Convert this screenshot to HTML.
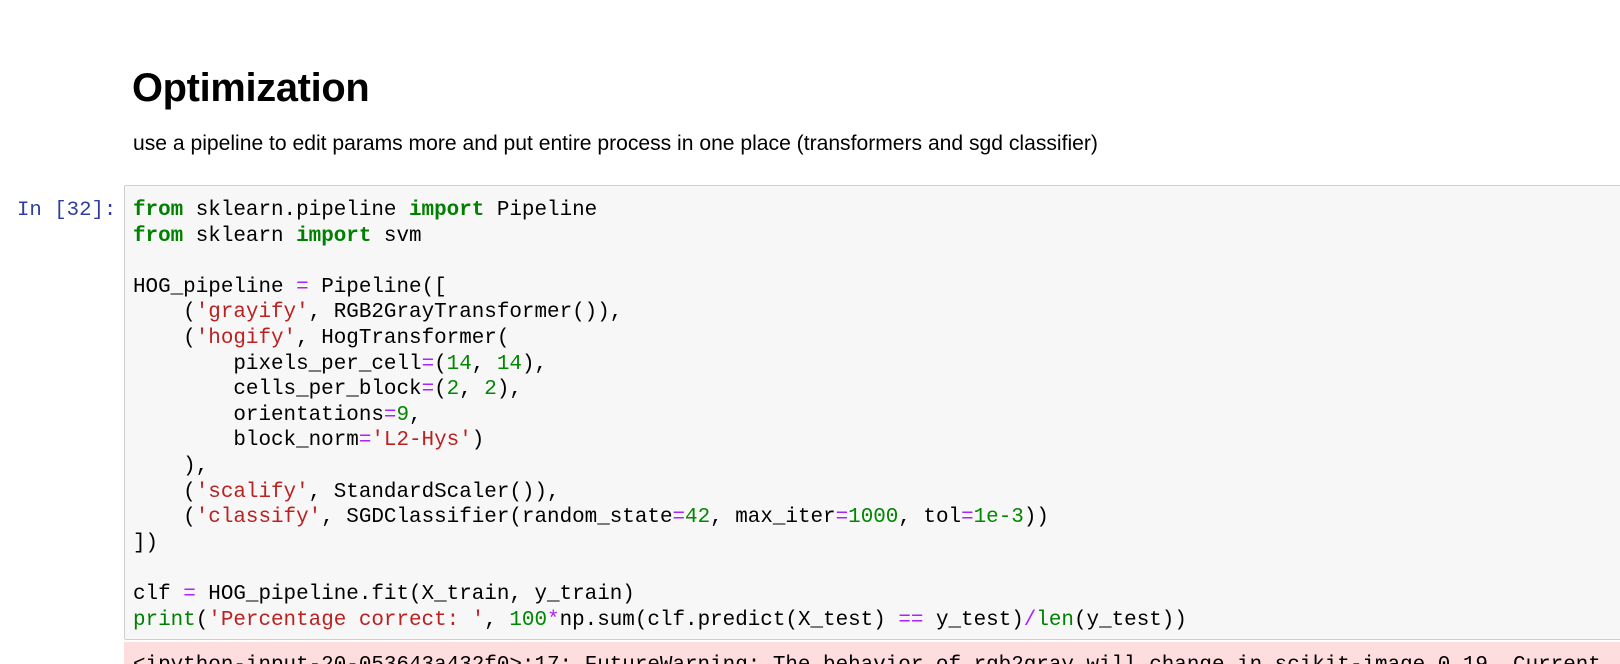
<!DOCTYPE html>
<html style="height:664px;overflow:hidden"><head><meta charset="utf-8"><style>
body{margin:0;width:1620px;height:664px;overflow:hidden;background:#fff;font-family:"Liberation Sans",sans-serif;position:relative}
h1{position:absolute;left:132px;top:69px;margin:0;font-size:39.8px;line-height:1;font-weight:bold;color:#000;letter-spacing:-0.3px}
p{position:absolute;left:133px;top:133px;margin:0;font-size:21.1px;line-height:1;color:#000}
.prompt{position:absolute;left:17px;top:198px;font-family:"Liberation Mono",monospace;font-size:20.7px;line-height:25.6px;color:#303f9f}
.cell{position:absolute;left:124px;top:185px;width:1520px;height:453px;background:#f7f7f7;border:1px solid #cfcfcf;border-radius:2px}
pre{position:absolute;left:133px;top:198px;margin:0;font-family:"Liberation Mono",monospace;font-size:20.92px;line-height:25.6px;color:#000}
.k{color:#008000;font-weight:bold}.s{color:#ba2121}.n{color:#080}.o{color:#aa22ff}.b{color:#008000}
.err{position:absolute;left:124px;top:642px;width:1496px;height:22px;background:#fddddd;overflow:hidden}
.err pre{left:9px;top:11px;white-space:pre}
</style></head><body>
<h1>Optimization</h1>
<p>use a pipeline to edit params more and put entire process in one place (transformers and sgd classifier)</p>
<div class="prompt">In [32]:</div>
<div class="cell"></div>
<pre><span class="k">from</span> sklearn.pipeline <span class="k">import</span> Pipeline
<span class="k">from</span> sklearn <span class="k">import</span> svm

HOG_pipeline <span class="o">=</span> Pipeline([
    (<span class="s">'grayify'</span>, RGB2GrayTransformer()),
    (<span class="s">'hogify'</span>, HogTransformer(
        pixels_per_cell<span class="o">=</span>(<span class="n">14</span>, <span class="n">14</span>),
        cells_per_block<span class="o">=</span>(<span class="n">2</span>, <span class="n">2</span>),
        orientations<span class="o">=</span><span class="n">9</span>,
        block_norm<span class="o">=</span><span class="s">'L2-Hys'</span>)
    ),
    (<span class="s">'scalify'</span>, StandardScaler()),
    (<span class="s">'classify'</span>, SGDClassifier(random_state<span class="o">=</span><span class="n">42</span>, max_iter<span class="o">=</span><span class="n">1000</span>, tol<span class="o">=</span><span class="n">1e-3</span>))
])

clf <span class="o">=</span> HOG_pipeline.fit(X_train, y_train)
<span class="b">print</span>(<span class="s">'Percentage correct: '</span>, <span class="n">100</span><span class="o">*</span>np.sum(clf.predict(X_test) <span class="o">==</span> y_test)<span class="o">/</span><span class="b">len</span>(y_test))</pre>
<div class="err"><pre>&lt;ipython-input-20-053643a432f0&gt;:17: FutureWarning: The behavior of rgb2gray will change in scikit-image 0.19. Current</pre></div>
</body></html>
